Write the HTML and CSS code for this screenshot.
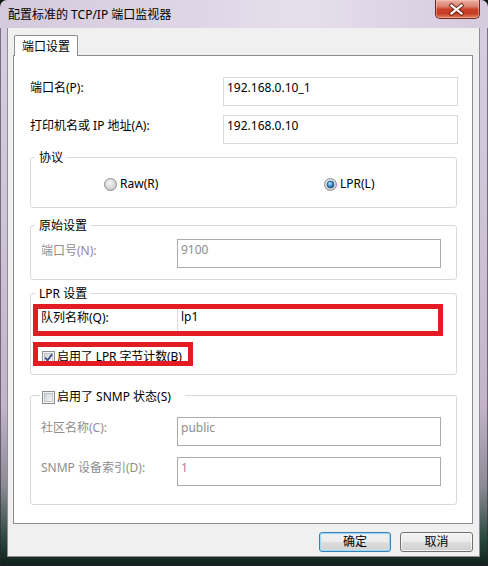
FILE: index.html
```html
<!DOCTYPE html>
<html lang="zh-CN">
<head>
<meta charset="utf-8">
<title>配置标准的 TCP/IP 端口监视器</title>
<link rel="stylesheet" href="styles.css">
</head>
<body>
<div class="window">
  <div class="titlebar">
    <span class="title">配置标准的 TCP/IP 端口监视器</span>
    <div class="close">
      <svg width="45" height="19" viewBox="0 0 45 19">
        <path d="M17.5 5.5 L27.5 13.5 M27.5 5.5 L17.5 13.5" stroke="#5a1a12" stroke-width="4.2" stroke-linecap="square" fill="none" opacity="0.75"/>
        <path d="M17.5 5.5 L27.5 13.5 M27.5 5.5 L17.5 13.5" stroke="#ffffff" stroke-width="2.2" stroke-linecap="square" fill="none"/>
      </svg>
    </div>
  </div>
  <div class="client">
    <div class="tabs"><div class="tab">端口设置</div></div>
    <div class="panel">
      <div class="row">
        <span class="label">端口名(P):</span>
        <div class="input">192.168.0.10_1</div>
      </div>
      <div class="row r2">
        <span class="label">打印机名或 IP 地址(A):</span>
        <div class="input">192.168.0.10</div>
      </div>

      <div class="group g-proto">
        <div class="legend">协议</div>
        <div class="radios">
          <div class="opt">
            <svg width="13" height="13" viewBox="0 0 13 13">
              <defs><radialGradient id="rOff" cx="45%" cy="40%" r="65%"><stop offset="0" stop-color="#f7f7f7"/><stop offset="1" stop-color="#c4c4c4"/></radialGradient></defs>
              <circle cx="6.5" cy="6.5" r="6" fill="url(#rOff)" stroke="#8e8f8f"/>
            </svg>
            <span>Raw(R)</span>
          </div>
          <div class="opt">
            <svg width="13" height="13" viewBox="0 0 13 13">
              <defs>
                <radialGradient id="rRing" cx="45%" cy="40%" r="65%"><stop offset="0" stop-color="#f7f7f7"/><stop offset="1" stop-color="#c4c4c4"/></radialGradient>
                <radialGradient id="rDot" cx="40%" cy="35%" r="70%"><stop offset="0" stop-color="#b9e6fb"/><stop offset="0.55" stop-color="#3b8fd0"/><stop offset="1" stop-color="#17508c"/></radialGradient>
              </defs>
              <circle cx="6.5" cy="6.5" r="6" fill="url(#rRing)" stroke="#8e8f8f"/>
              <circle cx="6.5" cy="6.5" r="3.4" fill="url(#rDot)" stroke="#1c4a7a" stroke-width="0.8"/>
            </svg>
            <span>LPR(L)</span>
          </div>
        </div>
      </div>

      <div class="group g-raw">
        <div class="legend">原始设置</div>
        <div class="grow">
          <span class="label dis">端口号(N):</span>
          <div class="input dis">9100</div>
        </div>
      </div>

      <div class="group g-lpr">
        <div class="legend">LPR 设置</div>
        <div class="grow">
          <span class="label">队列名称(Q):</span>
          <div class="input">lp1</div>
        </div>
        <div class="check">
          <svg width="13" height="13" viewBox="0 0 13 13">
            <defs><linearGradient id="cbOn" x1="0" y1="0" x2="1" y2="1"><stop offset="0" stop-color="#cfd3d8"/><stop offset="1" stop-color="#f7f8f9"/></linearGradient></defs>
            <rect x="0.5" y="0.5" width="12" height="12" fill="#f4f4f4" stroke="#8e8f8f"/>
            <rect x="2.5" y="2.5" width="8" height="8" fill="url(#cbOn)" stroke="#b3b8bd" stroke-width="0.8"/>
            <path d="M3.2 6.6 L5.6 9.4 L10 3.2" stroke="#37497d" stroke-width="1.8" fill="none"/>
          </svg>
          <span>启用了 LPR 字节计数(B)</span>
        </div>
      </div>

      <div class="group g-snmp">
        <div class="legend check-legend">
          <svg width="13" height="13" viewBox="0 0 13 13">
            <defs><linearGradient id="cbOff" x1="0" y1="0" x2="1" y2="1"><stop offset="0" stop-color="#cfd3d8"/><stop offset="1" stop-color="#f7f8f9"/></linearGradient></defs>
            <rect x="0.5" y="0.5" width="12" height="12" fill="#f4f4f4" stroke="#8e8f8f"/>
            <rect x="2.5" y="2.5" width="8" height="8" fill="url(#cbOff)" stroke="#b3b8bd" stroke-width="0.8"/>
          </svg>
          <span>启用了 SNMP 状态(S)</span>
        </div>
        <div class="grow s1">
          <span class="label dis">社区名称(C):</span>
          <div class="input dis">public</div>
        </div>
        <div class="grow s2">
          <span class="label dis">SNMP 设备索引(D):</span>
          <div class="input dis">1</div>
        </div>
      </div>
    </div>
    <div class="buttons">
      <div class="btn default">确定</div>
      <div class="btn cancel">取消</div>
    </div>
  </div>
  <div class="mark mark-queue"></div>
  <div class="mark mark-count"></div>
</div>
</body>
</html>
```

FILE: styles.css
```css
body {
  margin: 0;
  background: #0d1a16;
}

.window {
  position: relative;
  width: 488px;
  height: 566px;
  overflow: hidden;
  display: flex;
  flex-direction: column;
  box-sizing: border-box;
  border-radius: 7px 7px 0 0;
  background: linear-gradient(180deg, #dacfe2 0%, #cfc3d6 40%, #c2b3c9 72%, #8b8a93 86%, #2c4a3f 95%, #0f2019 100%);
  box-shadow: inset 0 0 0 1px rgba(45, 35, 55, 0.55);
  font-family: "Noto Sans", "Noto Sans CJK SC", sans-serif;
  font-size: 12px;
  color: #000;
}

.titlebar {
  height: 28px;
  flex: none;
  display: flex;
  align-items: flex-start;
  padding-left: 8px;
  background: linear-gradient(90deg, #d5cadd 0%, #ddd4e4 35%, #e5dfeb 62%, #d6cadd 100%);
  border-radius: 7px 7px 0 0;
}

.title {
  margin-top: 7px;
  line-height: 16px;
  white-space: nowrap;
}

.close {
  margin-left: auto;
  margin-right: 8px;
  width: 45px;
  height: 19px;
  box-sizing: border-box;
  border: 1px solid #6d2b22;
  border-top: none;
  border-radius: 0 0 5px 5px;
  background: linear-gradient(180deg, #eab0a2 0%, #dc8474 35%, #c9402b 52%, #c63d27 75%, #e0805f 100%);
  box-shadow: inset 0 0 0 1px rgba(255, 210, 190, 0.45);
  display: flex;
  align-items: center;
  justify-content: center;
}

.close svg {
  display: block;
  margin-left: -2px;
}

.client {
  margin-left: 7px;
  width: 473px;
  height: 529px;
  box-sizing: border-box;
  border: 1px solid #928c98;
  border-top: none;
  background: #f0f0f0;
  display: flex;
  flex-direction: column;
}

.tabs {
  display: flex;
  padding: 7px 0 0 6px;
}

.tab {
  position: relative;
  z-index: 1;
  width: 64px;
  height: 21px;
  box-sizing: border-box;
  border: 1px solid #898c95;
  border-bottom: none;
  border-radius: 2px 2px 0 0;
  background: #fff;
  padding: 3px 0 0 7px;
  line-height: 16px;
  margin-bottom: -1px;
  white-space: nowrap;
}

.panel {
  margin: 0 6px 0 5px;
  height: 469px;
  box-sizing: border-box;
  border: 1px solid #898c95;
  background: #fff;
  padding: 21px 14px 0 16px;
  display: flex;
  flex-direction: column;
}

.row {
  display: grid;
  grid-template-columns: 193px 235px;
}

.r2 {
  margin-top: 9px;
}

.label {
  padding-top: 3px;
  line-height: 16px;
  white-space: nowrap;
}

.input {
  box-sizing: border-box;
  height: 29px;
  border: 1px solid #d8dade;
  padding: 2px 3px;
  line-height: 16px;
  background: #fff;
  white-space: nowrap;
  overflow: hidden;
}

.dis {
  color: #8e8e8e;
}

.input.dis {
  border-color: #a9abae;
}

.group {
  margin-right: 1px;
  box-sizing: border-box;
  border: 1px solid #d5dadf;
  border-radius: 3px;
  padding: 0 15px 0 10px;
  display: flex;
  flex-direction: column;
}

.g-proto { margin-top: 13px; height: 51px; }
.g-raw { margin-top: 17px; height: 55px; }
.g-lpr { margin-top: 13px; height: 82px; }
.g-snmp { margin-top: 20px; height: 110px; }

.legend {
  align-self: flex-start;
  margin: -8px 0 0 -6px;
  padding: 0 4px;
  height: 16px;
  line-height: 16px;
  background: #fff;
  white-space: nowrap;
}

.check-legend {
  margin: -7px 0 0 -1px;
  padding: 0 14px 0 2px;
  display: flex;
  align-items: center;
  gap: 2px;
}

.grow {
  display: grid;
  grid-template-columns: 136px 264px;
}

.grow .label {
  padding-top: 4px;
}

.g-raw .grow { margin-top: 5px; }
.g-lpr .grow { margin-top: 4px; }
.g-snmp .s1 { margin-top: 12px; }
.g-snmp .s2 { margin-top: 11px; }
.g-snmp .grow .label { padding-top: 3px; }

.radios {
  margin-top: 10px;
  display: grid;
  grid-template-columns: 220px auto;
  padding-left: 63px;
}

.opt,
.check {
  display: flex;
  align-items: center;
  gap: 3px;
  line-height: 16px;
  white-space: nowrap;
}

.opt svg,
.check svg,
.check-legend svg {
  display: block;
  flex: none;
}

.check {
  margin-top: 14px;
  margin-left: 1px;
  gap: 2px;
  letter-spacing: -0.1px;
}

.buttons {
  display: flex;
  justify-content: flex-end;
  gap: 9px;
  margin-top: 8px;
  padding-right: 6px;
}

.btn {
  width: 72px;
  height: 20px;
  box-sizing: border-box;
  border: 1px solid #707070;
  border-radius: 3px;
  text-align: center;
  line-height: 18px;
  background: linear-gradient(180deg, #f2f2f2 0%, #ebebeb 50%, #dddddd 51%, #cfcfcf 100%);
  box-shadow: inset 0 0 0 1px rgba(255, 255, 255, 0.7);
}

.btn.cancel {
  width: 73px;
}

.btn.default {
  border-color: #3c7fb1;
  box-shadow: inset 0 0 0 1px rgba(150, 215, 245, 0.9), inset 0 0 0 2px rgba(200, 235, 250, 0.5);
}

.mark {
  position: absolute;
  box-sizing: border-box;
  border: 5px solid #e31b23;
}

.mark-queue {
  left: 33px;
  top: 304px;
  width: 410px;
  height: 32px;
}

.mark-count {
  left: 33px;
  top: 342px;
  width: 160px;
  height: 24px;
}
```
